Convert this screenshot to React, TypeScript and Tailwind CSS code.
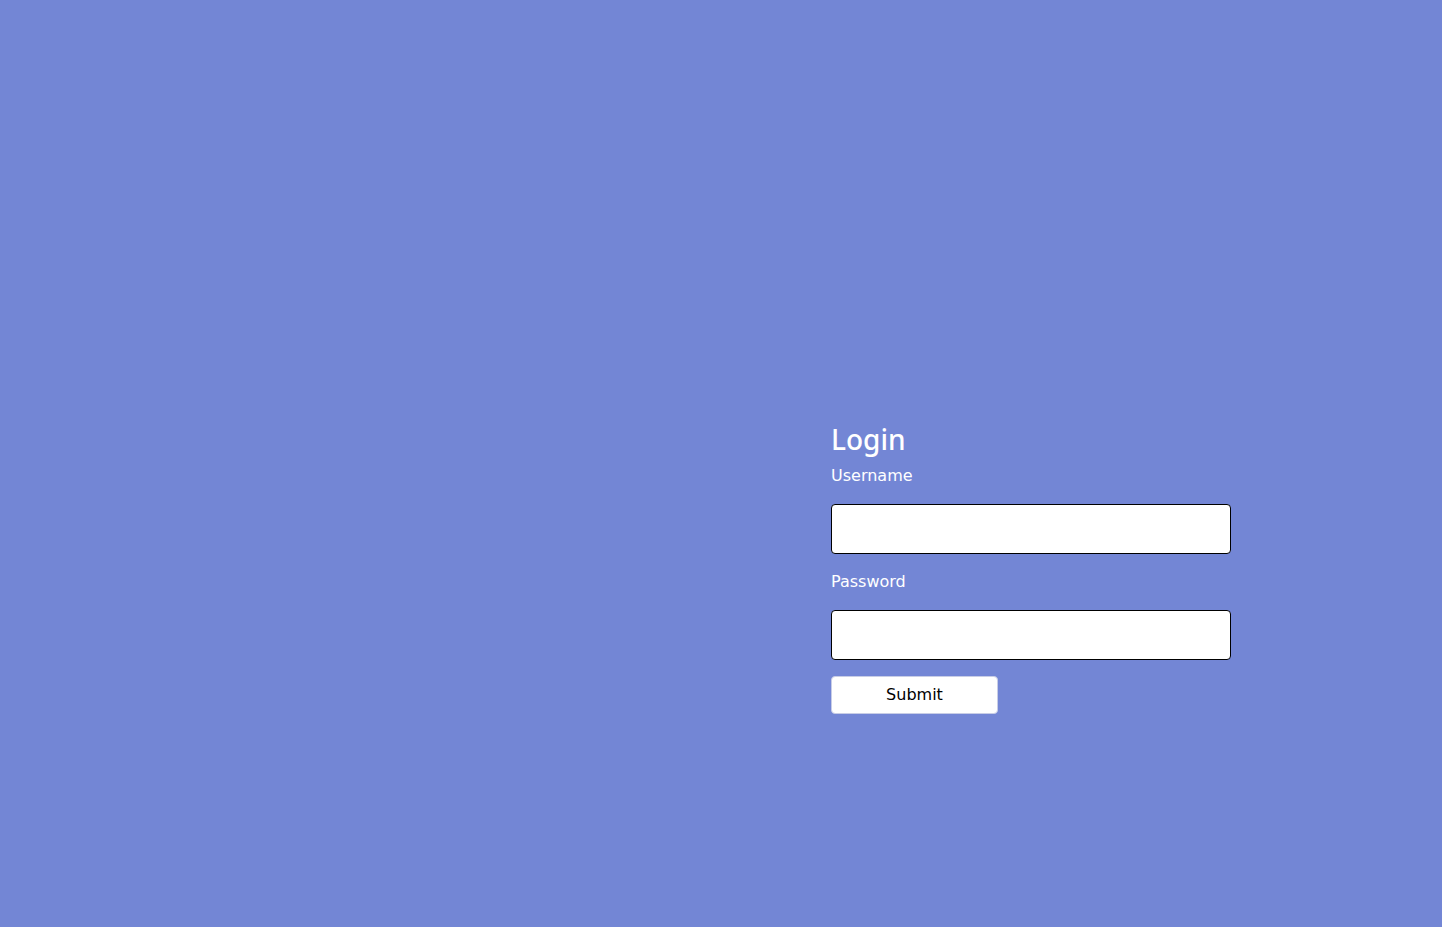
import React, { useState } from "react";

export default function App() {
  const [username, setUsername] = useState("");
  const [password, setPassword] = useState("");

  return (
    <div
      className="min-h-screen w-full bg-[#7386d5] text-white"
      style={{ fontFamily: '"Noto Sans", "Open Sans", sans-serif' }}
    >
      <div className="flex justify-end pr-[211px] pt-[418px]">
        <form
          className="flex w-[400px] flex-col"
          onSubmit={(e) => e.preventDefault()}
        >
          <h2 className="text-[28px] font-medium leading-[42px]">Login</h2>

          <label
            htmlFor="username"
            className="mt-[4px] font-['DejaVu_Sans',sans-serif] text-[16px] leading-6"
          >
            Username
          </label>
          <input
            id="username"
            type="text"
            value={username}
            onChange={(e) => setUsername(e.target.value)}
            className="mt-[16px] h-[50px] w-full rounded border border-black bg-white px-3 text-black outline-none"
          />

          <label
            htmlFor="password"
            className="mt-[16px] font-['DejaVu_Sans',sans-serif] text-[16px] leading-6"
          >
            Password
          </label>
          <input
            id="password"
            type="password"
            value={password}
            onChange={(e) => setPassword(e.target.value)}
            className="mt-[16px] h-[50px] w-full rounded border border-black bg-white px-3 text-black outline-none"
          />

          <button
            type="submit"
            className="mt-4 h-[38px] w-[167px] rounded border border-[#c8cde6] bg-white font-['DejaVu_Sans',sans-serif] text-[16px] text-black"
          >
            Submit
          </button>
        </form>
      </div>
    </div>
  );
}
